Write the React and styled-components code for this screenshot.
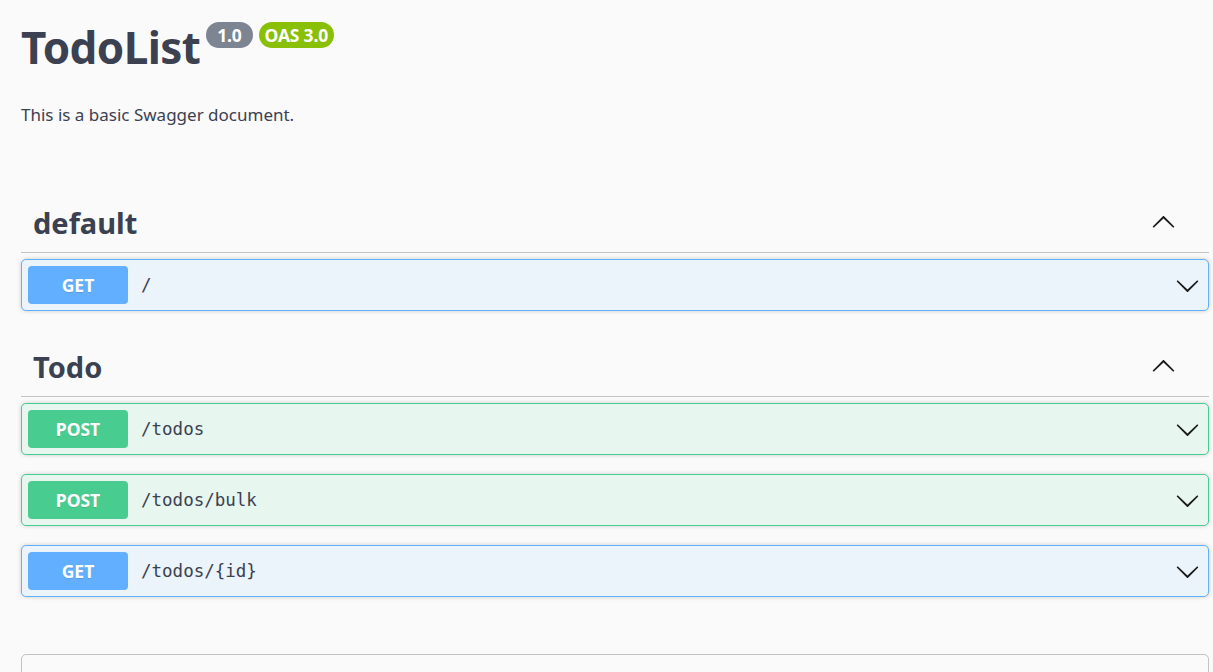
import React from 'react'
import styled, {createGlobalStyle} from 'styled-components'

const TEXT = '#3b4151'

const METHODS = {
  GET: {color: '#61affe', bg: '#ebf3fb'},
  POST: {color: '#49cc90', bg: '#e8f6f0'},
}

const GlobalStyle = createGlobalStyle`
  html, body {
    margin: 0;
    padding: 0;
    background: #fafafa;
  }
  body {
    font-family: 'Noto Sans', 'Open Sans', sans-serif;
    color: ${TEXT};
  }
`

const Wrapper = styled.div`
  padding: 0 4px 0 21px;
  overflow: hidden;
  height: 672px;
`

const Info = styled.div`
  padding-top: 15px;
`

const TitleRow = styled.div`
  display: flex;
  align-items: flex-start;
`

const Title = styled.h2`
  margin: 0;
  font-size: 44px;
  line-height: 64px;
  font-weight: 700;
  color: ${TEXT};
  letter-spacing: -0.6px;
`

const Badges = styled.div`
  display: flex;
  gap: 6px;
  margin-left: 6px;
  margin-top: 7px;
`

const Badge = styled.span`
  display: inline-flex;
  align-items: center;
  height: 26px;
  padding: 0 ${p => p.$pad}px;
  border-radius: 57px;
  background: ${p => p.$color};
  color: #fff;
  font-size: 17.5px;
  font-weight: 700;
  letter-spacing: -0.2px;
`

const Description = styled.p`
  margin: 24px 0 0;
  font-size: 17px;
  line-height: 24px;
  color: ${TEXT};
`

const Sections = styled.div`
  margin-top: 69px;
  display: flex;
  flex-direction: column;
  gap: 10px;
`

const TagSection = styled.section`
  display: flex;
  flex-direction: column;
`

const TagHeader = styled.h3`
  display: flex;
  align-items: center;
  justify-content: space-between;
  height: 52px;
  margin: 0 0 6px;
  padding: 0 33px 4px 12px;
  border-bottom: 1px solid rgba(59, 65, 81, 0.3);
  font-size: 29px;
  font-weight: 700;
  color: ${TEXT};
`

const OpBlock = styled.div`
  display: flex;
  align-items: center;
  height: 50px;
  margin-bottom: 19px;
  padding: 0 8px 0 6px;
  border: 1px solid ${p => METHODS[p.$method].color};
  border-radius: 5px;
  background: ${p => METHODS[p.$method].bg};
  box-shadow: 0 0 4px rgba(0, 0, 0, 0.19);
`

const Method = styled.span`
  display: flex;
  align-items: center;
  justify-content: center;
  width: 100px;
  height: 38px;
  border-radius: 4px;
  background: ${p => METHODS[p.$method].color};
  color: #fff;
  font-size: 17.5px;
  font-weight: 700;
  text-shadow: 0 1px 0 rgba(0, 0, 0, 0.1);
`

const Path = styled.span`
  flex: 1;
  padding-left: 13px;
  font-family: 'DejaVu Sans Mono', 'Liberation Mono', monospace;
  font-size: 17.5px;
  color: ${TEXT};
`

const Models = styled.div`
  margin-top: 38px;
  height: 60px;
  border: 1px solid rgba(59, 65, 81, 0.3);
  border-radius: 5px;
`

const Chevron = ({up}) => (
  <svg
    width="25"
    height="25"
    viewBox="0 0 20 20"
    style={up ? {transform: 'rotate(180deg)'} : undefined}
  >
    <path
      fill="#1b1b1b"
      d="M17.418 6.109c.272-.268.709-.268.979 0s.271.701 0 .969l-7.908 7.83c-.27.268-.707.268-.979 0l-7.908-7.83c-.27-.268-.27-.701 0-.969.271-.268.709-.268.979 0L10 13.25l7.418-7.141z"
    />
  </svg>
)

const tags = [
  {name: 'default', ops: [{method: 'GET', path: '/'}]},
  {
    name: 'Todo',
    ops: [
      {method: 'POST', path: '/todos'},
      {method: 'POST', path: '/todos/bulk'},
      {method: 'GET', path: '/todos/{id}'},
    ],
  },
]

export default function App() {
  return (
    <Wrapper>
      <GlobalStyle />
      <Info>
        <TitleRow>
          <Title>TodoList</Title>
          <Badges>
            <Badge $color="#7d8492" $pad={11}>1.0</Badge>
            <Badge $color="#89bf04" $pad={6}>OAS 3.0</Badge>
          </Badges>
        </TitleRow>
        <Description>This is a basic Swagger document.</Description>
      </Info>
      <Sections>
        {tags.map(tag => (
          <TagSection key={tag.name}>
            <TagHeader>
              {tag.name}
              <Chevron up />
            </TagHeader>
            {tag.ops.map(op => (
              <OpBlock key={op.method + op.path} $method={op.method}>
                <Method $method={op.method}>{op.method}</Method>
                <Path>{op.path}</Path>
                <Chevron />
              </OpBlock>
            ))}
          </TagSection>
        ))}
      </Sections>
      <Models />
    </Wrapper>
  )
}
